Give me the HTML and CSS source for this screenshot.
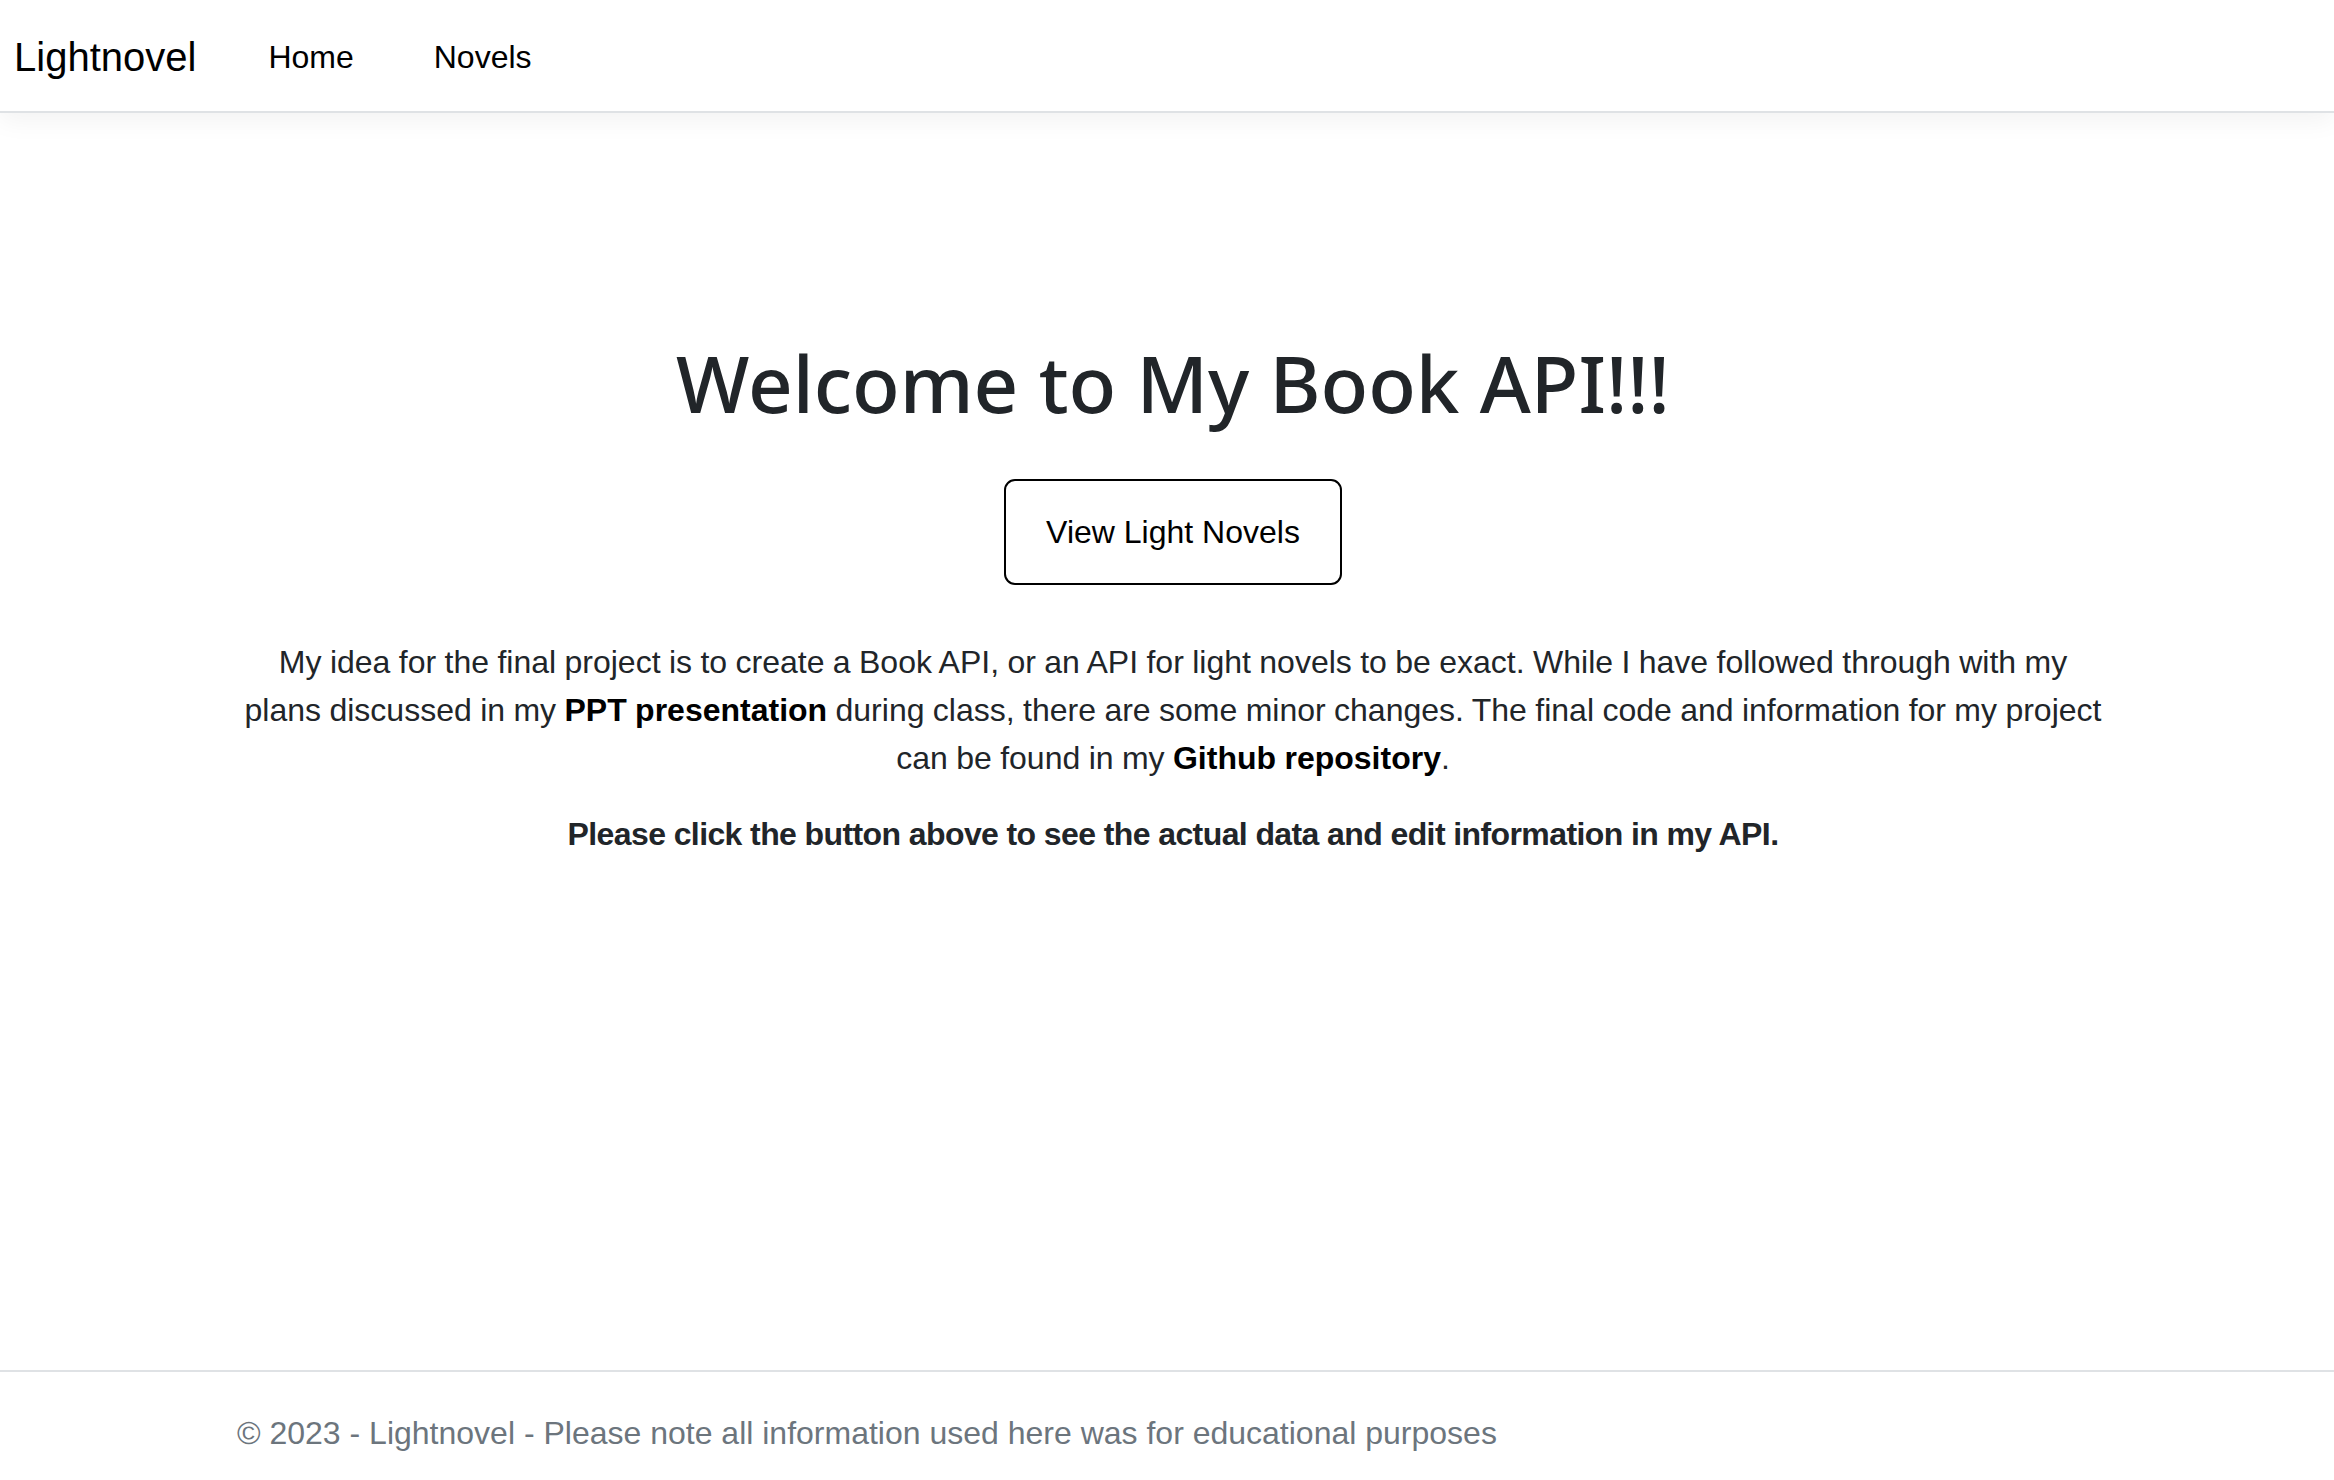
FILE: index.html
```html
<!DOCTYPE html>
<html lang="en">
<head>
<meta charset="utf-8">
<title>Lightnovel</title>
<link rel="stylesheet" href="styles.css">
</head>
<body>
<header class="navbar">
  <a class="brand" href="#">Lightnovel</a>
  <nav class="nav">
    <a class="nav-link" href="#">Home</a>
    <a class="nav-link" href="#">Novels</a>
  </nav>
</header>
<main class="main">
  <div class="container hero">
    <h1 class="title">Welcome to My Book API!!!</h1>
    <a class="btn" href="#">View Light Novels</a>
    <p class="intro">My idea for the final project is to create a Book API, or an API for light novels to be exact. While I have followed through with my plans discussed in my <b>PPT presentation</b> during class, there are some minor changes. The final code and information for my project can be found in my <b>Github repository</b>.</p>
    <p class="cta"><b>Please click the button above to see the actual data and edit information in my API.</b></p>
  </div>
</main>
<footer class="footer">
  <div class="container footer-text">&copy; 2023 - Lightnovel - Please note all information used here was for educational purposes</div>
</footer>
</body>
</html>
```

FILE: styles.css
```css
html, body {
  height: 100%;
}
body {
  margin: 0;
  min-height: 100vh;
  display: flex;
  flex-direction: column;
  font-family: "Liberation Sans", Arial, sans-serif;
  font-size: 32px;
  line-height: 1.5;
  color: #212529;
  background: #fff;
}
a {
  text-decoration: none;
  color: inherit;
}
.navbar {
  height: 113px;
  flex: none;
  box-sizing: border-box;
  display: flex;
  align-items: center;
  padding: 2px 0 0 14px;
  border-bottom: 2px solid #dfe2e5;
  box-shadow: 0 8px 24px rgba(0, 0, 0, 0.05);
  position: relative;
  z-index: 1;
}
.brand {
  font-size: 40px;
  line-height: 1.5;
  color: #000;
  margin-right: 32px;
}
.nav {
  display: flex;
}
.nav-link {
  padding: 0 40px;
  color: #000;
}
.main {
  flex: 1;
}
.container {
  max-width: 1932px;
  margin: 0 auto;
  padding: 0 24px 0 36px;
  box-sizing: border-box;
}
.hero {
  text-align: center;
  padding-top: 222px;
}
.title {
  font-family: "Noto Sans", "Liberation Sans", sans-serif;
  font-weight: 500;
  font-size: 78px;
  line-height: 96px;
  margin: 0 0 48px;
  color: #212529;
}
.btn {
  display: inline-block;
  border: 2px solid #000;
  border-radius: 11px;
  padding: 27px 40px;
  font-size: 32px;
  line-height: 48px;
  color: #000;
}
.intro {
  margin: 53px 0 28px;
  word-spacing: -0.5px;
}
.intro b {
  color: #000;
}
.cta {
  margin: 0;
  letter-spacing: -0.6px;
}
.footer {
  flex: none;
  height: 110px;
  box-sizing: border-box;
  border-top: 2px solid #dfe2e5;
}
.footer-text {
  color: #6c757d;
  padding-top: 37px;
  line-height: 48px;
}
```
